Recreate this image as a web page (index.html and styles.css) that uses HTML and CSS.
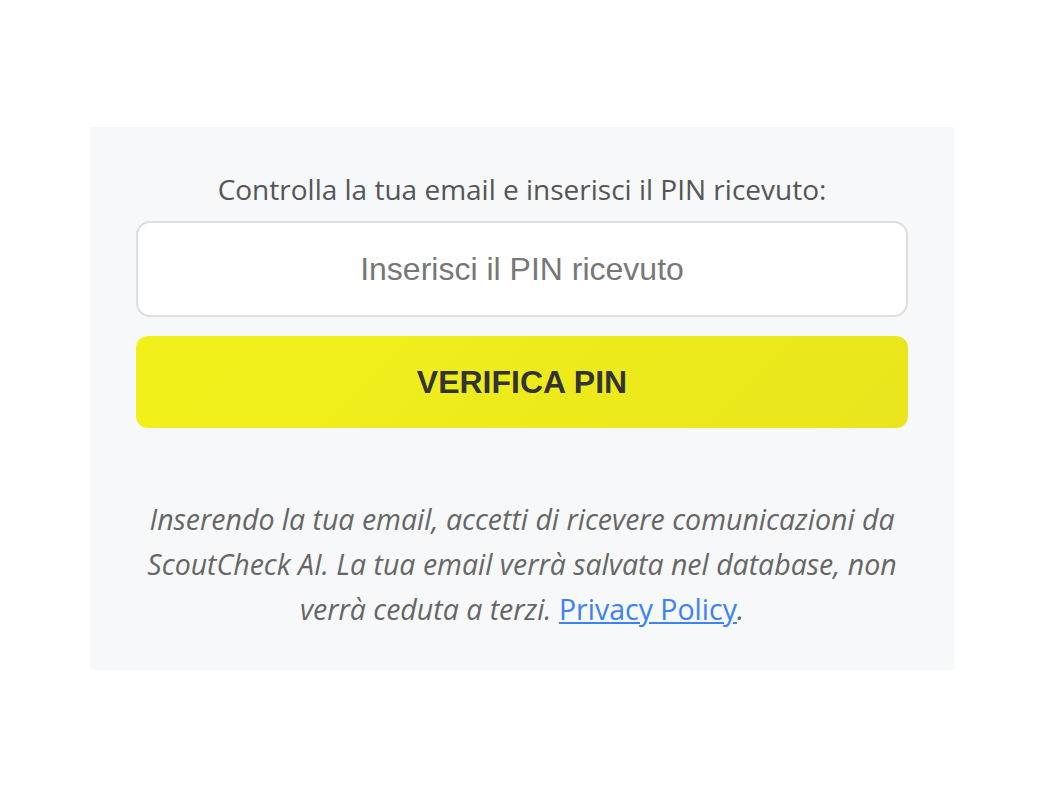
FILE: index.html
```html
<!DOCTYPE html>
<html lang="it">
<head>
<meta charset="utf-8">
<link rel="stylesheet" href="styles.css">
</head>
<body>
<main class="page">
  <section class="panel">
    <p class="prompt">Controlla la tua email e inserisci il PIN ricevuto:</p>
    <input class="pin-input" type="text" placeholder="Inserisci il PIN ricevuto">
    <button class="verify-btn" type="button">VERIFICA PIN</button>
    <p class="note">Inserendo la tua email, accetti di ricevere comunicazioni da ScoutCheck AI. La tua email verrà salvata nel database, non verrà ceduta a terzi. <a href="#" class="link">Privacy Policy</a>.</p>
  </section>
</main>
</body>
</html>
```
FILE: styles.css
```css
html, body {
  margin: 0;
  padding: 0;
  background: #ffffff;
}
.page {
  padding: 127px 0 0 90px;
}
.panel {
  box-sizing: border-box;
  width: 864px;
  height: 543px;
  background: #f7f8fa;
  padding: 43px 46px 0 46px;
  display: flex;
  flex-direction: column;
  font-family: "Open Sans", "Noto Sans", sans-serif;
}
.prompt {
  margin: 0 0 13px 0;
  text-align: center;
  font-size: 28px;
  line-height: 38px;
  color: #555555;
}
.pin-input {
  box-sizing: border-box;
  width: 100%;
  height: 96px;
  flex: none;
  border: 2px solid #dedede;
  border-radius: 14px;
  background: #ffffff;
  text-align: center;
  font-family: "Liberation Sans", Arial, sans-serif;
  font-size: 32px;
  color: #333;
  outline: none;
  margin: 0 0 19px 0;
}
.pin-input::placeholder {
  color: #777777;
}
.verify-btn {
  width: 100%;
  height: 92px;
  flex: none;
  border: none;
  border-radius: 12px;
  background: linear-gradient(135deg, #f3f11b 0%, #e9e51c 100%);
  font-family: "Liberation Sans", Arial, sans-serif;
  font-weight: bold;
  font-size: 32px;
  color: #333333;
  margin: 0 0 69px 0;
}
.note {
  margin: 0;
  text-align: center;
  font-style: italic;
  font-size: 28.5px;
  line-height: 45px;
  color: #666666;
}
.link {
  font-style: normal;
  color: #3b82f6;
  text-decoration: underline;
}
```
